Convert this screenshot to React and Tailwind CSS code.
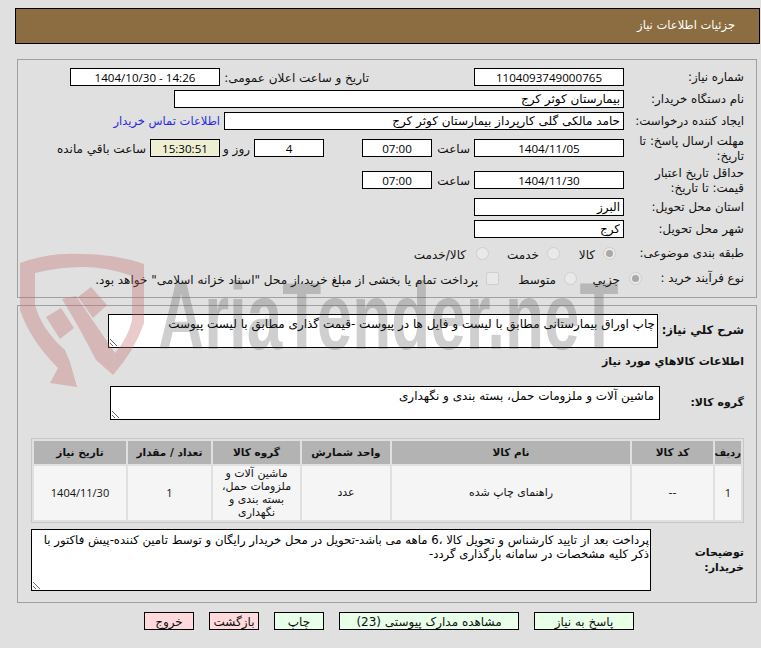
import React from 'react'

const label = 'w-[120px] shrink-0 text-[11.8px] leading-[15px] pt-px'
const rtlBox = 'h-[18px] bg-white border border-black text-[12px] text-black px-[3px] outline-none'
const btn = 'h-[18px] border border-black text-[12px]'

const Field = ({ value, className }) => (
  <input
    readOnly
    value={value}
    dir="ltr"
    className={`h-[18px] border border-black text-center text-[11.6px] text-black outline-none font-['Open_Sans',sans-serif] ${className}`}
  />
)

const Radio = ({ checked }) => (
  <span className="w-[13px] h-[13px] rounded-full bg-[#e9e9e9] border border-[#cfcfcf] flex items-center justify-center shrink-0">
    {checked && <span className="w-[7px] h-[7px] rounded-full bg-[#a9a9a9]" />}
  </span>
)

const Watermark = () => (
  <div className="absolute left-0 top-[250px] w-[640px] h-[140px] pointer-events-none">
    <svg width="160" height="140" viewBox="0 250 160 140" className="absolute left-0 top-0">
      <g fill="#c46a6a" fillOpacity="0.35">
        <path d="M20 263 Q50 252 82 254 Q115 254 144 264 L144 323 Q135 350 113 375 L115 353 Q128 338 132 320 L132 276 Q108 267 82 267 Q58 267 35 273 L35 305 Q42 330 65 350 L70 362 L77 387 L50 383 L58 368 Q30 340 20 310 Z" />
        <path d="M46 317 L61 308 L74 328 L60 339 Z" />
        <path d="M62 299 L76 296 L115 353 L113 375 L96 360 Q78 325 62 299 Z" />
        <path d="M78 297 L91 287 L107 305 L93 318 Z" />
      </g>
    </svg>
    <div
      dir="ltr"
      className="absolute left-[158px] top-[12px] w-[730px] origin-left scale-x-[0.68] text-[94px] leading-[110px] font-bold whitespace-nowrap text-[#404040]/25 font-['Liberation_Sans',sans-serif]"
    >
      AriaTender.neT
    </div>
  </div>
)

export default function App() {
  return (
    <div dir="rtl" className="relative min-h-[648px] bg-[#e0e0e0] text-[12px] text-[#111] overflow-hidden font-['DejaVu_Sans',sans-serif]">
      <div className="pt-2 pr-px pl-[15px]">
        <div className="h-9 bg-[#8c6d42] border border-black flex items-center pr-6 text-white text-[11.5px]">
          جزئیات اطلاعات نیاز
        </div>
      </div>

      <div className="mt-[15px] mr-1 ml-[17px] h-[239px] border border-[#a0a0a0] pt-2 pr-3 flex flex-col">
        <div className="flex items-center h-[18px]">
          <div className={label}>شماره نیاز:</div>
          <Field value="1104093749000765" className="w-[150px] bg-white" />
          <div className="w-[254px] pr-[105px] pt-px whitespace-nowrap">تاریخ و ساعت اعلان عمومی:</div>
          <Field value="1404/10/30 - 14:26" className="w-[150px] bg-white" />
        </div>
        <div className="flex items-center h-[18px] mt-1">
          <div className={label}>نام دستگاه خریدار:</div>
          <input readOnly value="بیمارستان کوثر کرج" className={`w-[450px] ${rtlBox}`} />
        </div>
        <div className="flex items-center h-[18px] mt-1">
          <div className={label}>ایجاد کننده درخواست:</div>
          <input readOnly value="حامد مالکی گلی کارپرداز بیمارستان کوثر کرج" className={`w-[400px] ${rtlBox}`} />
          <a className="mr-1 pt-px text-[11.5px] text-[#2a2ae0] whitespace-nowrap">اطلاعات تماس خریدار</a>
        </div>
        <div className="flex items-center h-[32px] mt-[2px]">
          <div className={label}>مهلت ارسال پاسخ: تا تاریخ:</div>
          <Field value="1404/11/05" className="w-[150px] bg-white" />
          <div className="w-[42px] pr-1 pt-[2px]">ساعت</div>
          <Field value="07:00" className="w-[70px] bg-white" />
          <div className="w-[38px]" />
          <Field value="4" className="w-[70px] bg-white" />
          <div className="w-[34px] pr-1 pt-[2px]">روز و</div>
          <Field value="15:30:51" className="w-[70px] bg-[#eeeed2] border-[#555]" />
          <div className="pr-1 pt-[2px] whitespace-nowrap">ساعت باقي مانده</div>
        </div>
        <div className="flex items-center h-[32px]">
          <div className={label}>حداقل تاریخ اعتبار قیمت: تا تاریخ:</div>
          <Field value="1404/11/30" className="w-[150px] bg-white" />
          <div className="w-[42px] pr-1 pt-[2px]">ساعت</div>
          <Field value="07:00" className="w-[70px] bg-white" />
        </div>
        <div className="flex items-center h-[18px] mt-[2px]">
          <div className={label}>استان محل تحویل:</div>
          <input readOnly value="البرز" className={`w-[150px] ${rtlBox}`} />
        </div>
        <div className="flex items-center h-[18px] mt-1">
          <div className={label}>شهر محل تحویل:</div>
          <input readOnly value="کرج" className={`w-[150px] ${rtlBox}`} />
        </div>
        <div className="flex items-center h-[18px] mt-[6px]">
          <div className={label}>طبقه بندی موضوعی:</div>
          <div className="w-2" />
          <Radio checked />
          <div className="w-[43px] pr-2 pt-[3px]">کالا</div>
          <Radio />
          <div className="w-[58px] pr-2 pt-[3px]">خدمت</div>
          <Radio />
          <div className="pr-[10px] pt-[3px]">کالا/خدمت</div>
        </div>
        <div className="flex items-center h-[18px] mt-[7px]">
          <div className={label}>نوع فرآیند خرید :</div>
          <div className="mr-[-18px]"><Radio checked /></div>
          <div className="w-[52px] pr-[9px] pt-[3px]">جزیي</div>
          <Radio />
          <div className="w-[65px] pr-2 pt-[3px]">متوسط</div>
          <span className="w-[13px] h-[13px] rounded-[2px] bg-[#e9e9e9] border border-[#cfcfcf] shrink-0" />
          <div className="pr-2 pt-[3px] whitespace-nowrap">پرداخت تمام یا بخشی از مبلغ خرید،از محل "اسناد خزانه اسلامی" خواهد بود.</div>
        </div>
      </div>

      <div className="mt-[7px] mr-1 ml-[17px] h-[298px] border border-[#a0a0a0] pt-2 pr-3 pl-3">
        <div className="flex items-center">
          <div className="w-[86px] shrink-0 font-bold text-[11.5px] whitespace-nowrap">شرح کلي نیاز:</div>
          <textarea readOnly value="چاپ اوراق بیمارستانی مطابق با لیست و فایل ها در پیوست -قیمت گذاری مطابق با لیست پیوست" className="w-[550px] h-[34px] bg-white border border-black px-[2px] text-[12px] text-black outline-none" />
        </div>
        <div className="mt-[5px] h-[18px] leading-[18px] font-bold text-[11px]">اطلاعات کالاهاي مورد نیاز</div>
        <div className="flex items-center mt-[15px]">
          <div className="w-[84px] shrink-0 font-bold text-[11px]">گروه کالا:</div>
          <textarea readOnly value="ماشین آلات و ملزومات حمل، بسته بندی و نگهداری" className="w-[550px] h-[34px] bg-white border border-black px-[5px] text-[12px] text-black outline-none" />
        </div>
        <table className="mt-[18px] w-[713px] h-[85px] border border-[#c8c8c8] border-separate border-spacing-[2px] text-center table-fixed">
          <thead>
            <tr className="h-[23px] bg-[#b3b3b3] text-[10.5px]">
              <th className="w-[26px] font-bold text-[10px]">ردیف</th>
              <th className="w-[81px] font-bold">کد کالا</th>
              <th className="w-[238px] font-bold">نام کالا</th>
              <th className="w-[88px] font-bold">واحد شمارش</th>
              <th className="w-[87px] font-bold">گروه کالا</th>
              <th className="w-[83px] font-bold">تعداد / مقدار</th>
              <th className="font-bold">تاریخ نیاز</th>
            </tr>
          </thead>
          <tbody>
            <tr className="bg-[#f5f5f5] text-[11px]">
              <td className="font-['Open_Sans',sans-serif]">1</td>
              <td>--</td>
              <td>راهنمای چاپ شده</td>
              <td>عدد</td>
              <td className="leading-[13px] py-px px-2">ماشین آلات و ملزومات حمل، بسته بندی و نگهداری</td>
              <td className="font-['Open_Sans',sans-serif]">1</td>
              <td className="font-['Open_Sans',sans-serif]">1404/11/30</td>
            </tr>
          </tbody>
        </table>
        <div className="flex items-center mt-[6px]">
          <div className="w-[93px] shrink-0 pl-10 font-bold text-[11px] leading-[15px]">توضیحات خریدار:</div>
          <textarea readOnly value="پرداخت بعد از تایید کارشناس و تحویل کالا ،6 ماهه می باشد-تحویل در محل خریدار رایگان و توسط تامین کننده-پیش فاکتور با ذکر کلیه مشخصات در سامانه بارگذاری گردد-" className="w-[620px] h-[62px] bg-white border border-black px-px pt-[3px] text-[11.7px] leading-[14px] text-black outline-none" />
        </div>
      </div>

      <div className="mt-[9px] flex gap-[15px] pr-[127px]">
        <button className={`w-[100px] bg-[#e8ffe8] ${btn}`}>پاسخ به نیاز</button>
        <button className={`w-[180px] bg-[#e8ffe8] ${btn}`}>مشاهده مدارک پیوستی (23)</button>
        <button className={`w-[50px] bg-[#e8ffe8] ${btn}`}>چاپ</button>
        <button className={`w-[50px] bg-[#ffd9dc] ${btn}`}>بازگشت</button>
        <button className={`w-[50px] bg-[#ffd9dc] ${btn}`}>خروج</button>
      </div>

      <Watermark />
    </div>
  )
}
